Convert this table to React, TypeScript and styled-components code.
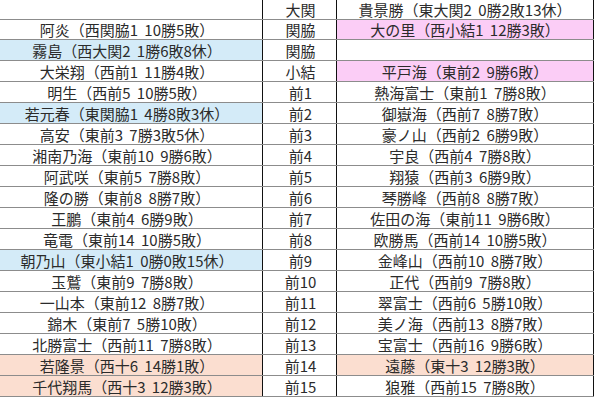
import React from 'react'
import styled, { createGlobalStyle } from 'styled-components'

const GlobalStyle = createGlobalStyle`
  html, body {
    margin: 0;
    padding: 0;
    background: #fff;
    overflow: hidden;
  }
`

type Tone = 'blue' | 'pink' | 'peach' | undefined

const tones: Record<string, string> = {
  blue: '#d4ebf8',
  pink: '#fbcdf6',
  peach: '#fbded0',
}

const Sheet = styled.div`
  width: 602px;
  margin-left: -8px;
  font-family: "Noto Sans CJK JP", "Noto Sans", sans-serif;
  font-size: 15px;
  word-spacing: 3px;
  color: #2b2b2b;
`

const Row = styled.div<{ $h: number }>`
  display: grid;
  grid-template-columns: 270px 75px 257px;
  height: ${p => p.$h}px;
  box-sizing: border-box;
  border-bottom: 1px solid #8c8c8c;
`

const Cell = styled.div<{ $tone?: Tone }>`
  display: flex;
  align-items: center;
  justify-content: center;
  white-space: nowrap;
  overflow: hidden;
  line-height: 1;
  background: ${p => (p.$tone ? tones[p.$tone] : '#fff')};
`

const RankCell = styled(Cell)`
  border-left: 1.5px solid #111;
  border-right: 1.5px solid #111;
  padding-left: 2px;
`

const SideCell = styled(Cell)`
  border-right: 1.5px solid #111;
`

type Line = {
  left: string
  leftTone?: Tone
  rank: string
  right: string
  rightTone?: Tone
}

const rows: Line[] = [
  { left: '', rank: '大関', right: '貴景勝（東大関2 0勝2敗13休）' },
  { left: '阿炎（西関脇1 10勝5敗）', rank: '関脇', right: '大の里（西小結1 12勝3敗）', rightTone: 'pink' },
  { left: '霧島（西大関2 1勝6敗8休）', leftTone: 'blue', rank: '関脇', right: '' },
  { left: '大栄翔（西前1 11勝4敗）', rank: '小結', right: '平戸海（東前2 9勝6敗）', rightTone: 'pink' },
  { left: '明生（西前5 10勝5敗）', rank: '前1', right: '熱海富士（東前1 7勝8敗）' },
  { left: '若元春（東関脇1 4勝8敗3休）', leftTone: 'blue', rank: '前2', right: '御嶽海（西前7 8勝7敗）' },
  { left: '高安（東前3 7勝3敗5休）', rank: '前3', right: '豪ノ山（西前2 6勝9敗）' },
  { left: '湘南乃海（東前10 9勝6敗）', rank: '前4', right: '宇良（西前4 7勝8敗）' },
  { left: '阿武咲（東前5 7勝8敗）', rank: '前5', right: '翔猿（西前3 6勝9敗）' },
  { left: '隆の勝（東前8 8勝7敗）', rank: '前6', right: '琴勝峰（西前8 8勝7敗）' },
  { left: '王鵬（東前4 6勝9敗）', rank: '前7', right: '佐田の海（東前11 9勝6敗）' },
  { left: '竜電（東前14 10勝5敗）', rank: '前8', right: '欧勝馬（西前14 10勝5敗）' },
  { left: '朝乃山（東小結1 0勝0敗15休）', leftTone: 'blue', rank: '前9', right: '金峰山（西前10 8勝7敗）' },
  { left: '玉鷲（東前9 7勝8敗）', rank: '前10', right: '正代（西前9 7勝8敗）' },
  { left: '一山本（東前12 8勝7敗）', rank: '前11', right: '翠富士（西前6 5勝10敗）' },
  { left: '錦木（東前7 5勝10敗）', rank: '前12', right: '美ノ海（西前13 8勝7敗）' },
  { left: '北勝富士（西前11 7勝8敗）', rank: '前13', right: '宝富士（西前16 9勝6敗）' },
  { left: '若隆景（西十6 14勝1敗）', leftTone: 'peach', rank: '前14', right: '遠藤（東十3 12勝3敗）', rightTone: 'peach' },
  { left: '千代翔馬（西十3 12勝3敗）', leftTone: 'peach', rank: '前15', right: '狼雅（西前15 7勝8敗）' },
]

const App: React.FC = () => {
  return (
    <>
      <GlobalStyle />
      <Sheet>
        {rows.map((r, i) => (
          <Row key={i} $h={i < 2 ? 20 : 21}>
            <Cell $tone={r.leftTone}>{r.left}</Cell>
            <RankCell>{r.rank}</RankCell>
            <SideCell $tone={r.rightTone}>{r.right}</SideCell>
          </Row>
        ))}
      </Sheet>
    </>
  )
}

export default App
